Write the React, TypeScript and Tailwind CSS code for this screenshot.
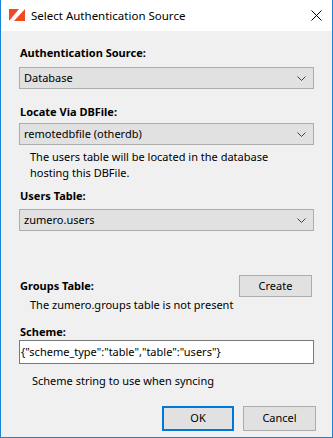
import React from "react";

const Chevron = (): JSX.Element => (
  <svg width="9" height="5" viewBox="0 0 9 5" className="shrink-0">
    <path d="M0.5 0.5 L4.5 4.5 L8.5 0.5" fill="none" stroke="#404040" strokeWidth="1" />
  </svg>
);

const Select = ({ value }: { value: string }): JSX.Element => (
  <div className="mx-[18px] h-[22px] flex items-center justify-between border border-[#adadad] bg-[#e1e1e1] pl-[4px] pr-[7px]">
    <span>{value}</span>
    <Chevron />
  </div>
);

const Label = ({ children, className }: { children: React.ReactNode; className?: string }): JSX.Element => (
  <div className={"pl-[19px] font-bold leading-4 " + (className ?? "")}>{children}</div>
);

export default function App(): JSX.Element {
  return (
    <div
      className="w-[333px] h-[438px] flex flex-col bg-[#f0f0f0] border-l border-r border-b border-[#1883d7] text-[11px] text-black"
      style={{ fontFamily: '"Noto Sans", "Open Sans", sans-serif' }}
    >
      {/* title bar */}
      <div className="h-[31px] bg-white flex items-center shrink-0">
        <svg width="17" height="13" viewBox="0 0 17 13" className="ml-[8px]">
          <polygon points="0,0 10,0 0,12" fill="#ef4a24" />
          <polygon points="16,0 16,12 5,12" fill="#ef4a24" />
        </svg>
        <span className="ml-[5px] leading-4 text-[11.5px]">Select Authentication Source</span>
        <svg width="11" height="11" viewBox="0 0 11 11" className="ml-auto mr-[10px]">
          <path d="M0.5 0.5 L10.5 10.5 M10.5 0.5 L0.5 10.5" stroke="#000" strokeWidth="1" />
        </svg>
      </div>

      <Label className="mt-[14px]">Authentication Source:</Label>
      <div className="mt-[6px]">
        <Select value="Database" />
      </div>

      <Label className="mt-[15px]">Locate Via DBFile:</Label>
      <div className="mt-[3px]">
        <Select value="remotedbfile (otherdb)" />
      </div>
      <div className="pl-[29px] mt-[4px] leading-4">
        The users table will be located in the database
        <br />
        hosting this DBFile.
      </div>

      <Label className="mt-[7px]">Users Table:</Label>
      <div className="mt-[5px]">
        <Select value="zumero.users" />
      </div>

      <div className="mt-[44px] flex items-center justify-between pr-[20px]">
        <Label>Groups Table:</Label>
        <button className="w-[73px] h-[22px] border border-[#adadad] bg-[#e1e1e1]">Create</button>
      </div>
      <div className="pl-[29px] leading-4">The zumero.groups table is not present</div>

      <Label className="mt-[11px]">Scheme:</Label>
      <div className="mx-[18px] h-[24px] flex items-center border border-[#7a7a7a] bg-white pl-[1px]">
        {'{"scheme_type":"table","table":"users"}'}
      </div>
      <div className="pl-[31px] mt-[9px] leading-4">Scheme string to use when syncing</div>

      <div className="mt-[17px] flex justify-end gap-[9px] pr-[16px]">
        <button className="w-[72px] h-[25px] border-2 border-[#0078d7] bg-[#e1e1e1]">OK</button>
        <button className="w-[73px] h-[25px] border border-[#adadad] bg-[#e1e1e1]">Cancel</button>
      </div>
    </div>
  );
}
